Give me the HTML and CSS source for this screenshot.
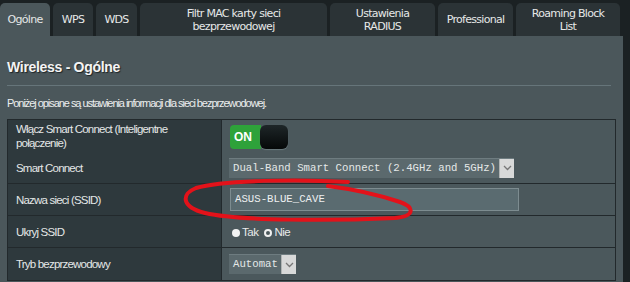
FILE: index.html
```html
<!DOCTYPE html>
<html>
<head>
<meta charset="utf-8">
<link rel="stylesheet" href="styles.css">
</head>
<body>
<div class="page">
  <div class="tabs">
    <div class="tab active w1">Ogólne</div>
    <div class="tab w2">WPS</div>
    <div class="tab w3">WDS</div>
    <div class="tab w4">Filtr MAC karty sieci<br>bezprzewodowej</div>
    <div class="tab w5">Ustawienia<br>RADIUS</div>
    <div class="tab w6">Professional</div>
    <div class="tab w7">Roaming Block<br>List</div>
  </div>
  <div class="panel">
    <div class="title">Wireless - Ogólne</div>
    <div class="sep"></div>
    <div class="desc">Poniżej opisane są ustawienia informacji dla sieci bezprzewodowej.</div>
    <table class="form">
      <tr class="r1 nob">
        <th>Włącz Smart Connect (Inteligentne połączenie)</th>
        <td><div class="toggle"><span class="on">ON</span><span class="knob"></span></div></td>
      </tr>
      <tr class="r2">
        <th>Smart Connect</th>
        <td><div class="select wide"><span class="val">Dual-Band Smart Connect (2.4GHz and 5GHz)</span><span class="arrow"><svg width="9" height="6" viewBox="0 0 9 6"><path d="M1 1 L4.5 4.5 L8 1" fill="none" stroke="#777" stroke-width="1.3"/></svg></span></div></td>
      </tr>
      <tr class="r3">
        <th>Nazwa sieci (SSID)</th>
        <td><div class="input">ASUS-BLUE_CAVE</div></td>
      </tr>
      <tr class="r4">
        <th>Ukryj SSID</th>
        <td><span class="radio filled"></span><span class="rl">Tak</span><span class="radio ring"></span><span class="rl">Nie</span></td>
      </tr>
      <tr class="r5">
        <th>Tryb bezprzewodowy</th>
        <td><div class="select narrow"><span class="val">Automat</span><span class="arrow"><svg width="9" height="6" viewBox="0 0 9 6"><path d="M1 1 L4.5 4.5 L8 1" fill="none" stroke="#777" stroke-width="1.3"/></svg></span></div></td>
      </tr>
    </table>
  </div>
  <svg class="scribble" width="630" height="282" viewBox="0 0 630 282">
    <path d="M348 182 C 300 179, 222 180, 196 188 C 181 194, 181 207, 205 213 C 240 221, 330 221, 395 218 C 416 216, 414 207, 400 202 C 382 196, 360 190, 328 186" fill="none" stroke="#e3121a" stroke-width="4" stroke-linecap="round" stroke-linejoin="round"/>
  </svg>
</div>
</body>
</html>
```

FILE: styles.css
```css
html, body {
  margin: 0;
  padding: 0;
  background: #1b2123;
}
.page {
  position: relative;
  width: 630px;
  height: 282px;
  overflow: hidden;
  font-family: "Liberation Sans", Arial, sans-serif;
}
.tabs {
  display: flex;
  gap: 3px;
  height: 33px;
  padding-top: 3px;
}
.tab {
  background: #2b3336;
  color: #e6e8e8;
  border-radius: 5px 5px 0 0;
  font-family: "DejaVu Sans", Verdana, sans-serif;
  font-size: 11px;
  letter-spacing: -0.7px;
  line-height: 13px;
  text-align: center;
  display: flex;
  align-items: center;
  justify-content: center;
}
.tab.active {
  background: #4b575b;
}
.w1 { width: 50px; }
.w2 { width: 40px; }
.w3 { width: 41px; }
.w4 { width: 187px; }
.w5 { width: 105px; }
.w6 { width: 75px; }
.w7 { width: 104px; }
.panel {
  width: 609px;
  height: 246px;
  background: #4b575b;
  padding: 0 7px;
}
.title {
  padding-top: 22px;
  height: 18px;
  line-height: 18px;
  font-size: 14px;
  font-weight: bold;
  color: #f4f4f4;
  letter-spacing: -0.3px;
  text-shadow: 1px 1px 1px #1d2426;
}
.sep {
  margin-top: 9px;
  height: 1px;
  background: #66757a;
  width: 604px;
}
.desc {
  margin-top: 10px;
  height: 15px;
  line-height: 15px;
  font-size: 11px;
  letter-spacing: -1.05px;
  color: #eceeee;
}
.form {
  margin-top: 8px;
  width: 609px;
  border-collapse: collapse;
  border: 1px solid #22292c;
}
.form th {
  width: 200px;
  background: #2e393d;
  color: #e4e7e7;
  font-weight: normal;
  text-align: left;
  font-size: 11.5px;
  letter-spacing: -0.8px;
  line-height: 14px;
  padding: 0 5px 0 8px;
  border: 1px solid #22292c;
}
.form td {
  background: #4b585c;
  padding: 0 0 0 9px;
  border: 1px solid #22292c;
  font-size: 11.5px;
  color: #e6e8e8;
}
.r1 th, .r1 td { height: 32px; border-bottom: none; }
.r2 th, .r2 td { height: 31px; border-top: none; }
.r3 th, .r3 td { height: 31px; }
.r4 th, .r4 td { height: 31px; }
.r5 th, .r5 td { height: 32px; }
.toggle {
  display: flex;
  width: 59px;
  height: 24px;
  margin-top: 2px;
  margin-left: -1px;
}
.toggle .on {
  width: 31px;
  background: #2ea23a;
  border-radius: 4px 0 0 4px;
  color: #fff;
  font-weight: bold;
  font-size: 12px;
  line-height: 24px;
  padding-left: 4px;
  box-sizing: border-box;
}
.toggle .knob {
  width: 28px;
  margin-left: -1px;
  background: linear-gradient(#1e2628, #050808);
  border-radius: 6px;
  box-shadow: 0 1px 1px #6b7a7e;
}
.select {
  display: flex;
  height: 20px;
  background: #5b696d;
  border-top: 1px solid #6e7c80;
  box-sizing: border-box;
  margin-left: -2px;
}
.select.wide { width: 285px; }
.select.narrow { width: 67px; }
.select .val {
  flex: 1;
  font-family: "Liberation Mono", "DejaVu Sans Mono", monospace;
  font-size: 10.7px;
  line-height: 19px;
  color: #e4e8e8;
  padding-left: 4px;
  letter-spacing: 0;
}
.select .arrow {
  width: 14px;
  background: #d8d9d9;
  border-left: 1px solid #b0b4b4;
  display: flex;
  align-items: center;
  justify-content: center;
}
.input {
  width: 289px;
  height: 23px;
  margin-left: -1px;
  box-sizing: border-box;
  background: #5a6b70;
  border: 1px solid #7d8c90;
  font-family: "Liberation Mono", "DejaVu Sans Mono", monospace;
  font-size: 10.7px;
  line-height: 21px;
  padding-left: 4px;
  color: #eef0f0;
}
.radio {
  display: inline-block;
  width: 8px;
  height: 8px;
  border-radius: 50%;
  vertical-align: -1px;
  margin-right: 2px;
  box-sizing: border-box;
}
.radio.filled {
  background: #f2f2f2;
  margin-left: 1px;
}
.radio.ring {
  border: 2px solid #f0f0f0;
  margin-left: 6px;
}
.rl {
  font-size: 11.5px;
  letter-spacing: -0.5px;
  color: #e8eaea;
}
.scribble {
  position: absolute;
  left: 0;
  top: 0;
  pointer-events: none;
}
```
